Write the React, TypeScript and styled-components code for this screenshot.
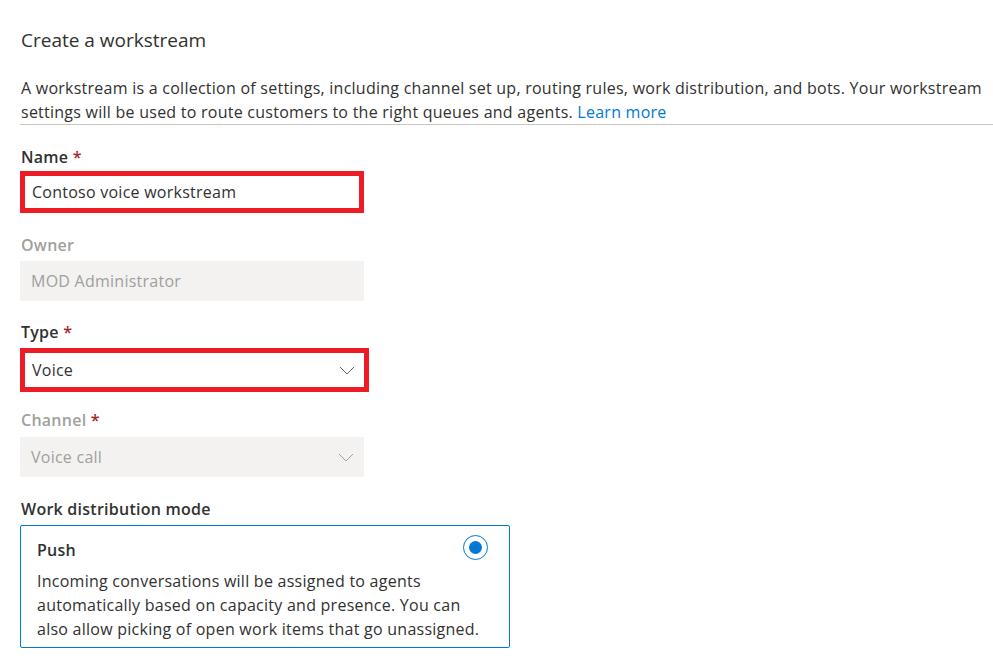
import React from "react";
import styled, { createGlobalStyle } from "styled-components";

const Global = createGlobalStyle`
  html, body { margin: 0; padding: 0; background: #ffffff; }
  body { font-family: "Open Sans", "Noto Sans", sans-serif; color: #323130; }
`;

const Page = styled.div`
  display: flex;
  flex-direction: column;
  align-items: flex-start;
  padding: 26px 0 0 20px;
  width: 973px;
  letter-spacing: 0.25px;
`;

const Title = styled.h1`
  margin: 0 0 0 1px;
  font-size: 19px;
  line-height: 28px;
  font-weight: 400;
  letter-spacing: 0;
  color: #323130;
`;

const Description = styled.p`
  margin: 22px 0 0 0;
  padding: 0 0 0 1px;
  font-size: 16px;
  line-height: 24px;
  color: #323130;
  align-self: stretch;
  border-bottom: 1px solid #c8c6c4;
  white-space: nowrap;
`;

const Link = styled.a`
  color: #0078d4;
  text-decoration: none;
`;

const Label = styled.div<{ $disabled?: boolean; $mt: number }>`
  margin: ${(p) => p.$mt}px 0 0 1px;
  font-size: 16px;
  line-height: 22px;
  font-weight: 600;
  color: ${(p) => (p.$disabled ? "#a19f9d" : "#323130")};
`;

const Star = styled.span`
  color: #a4262c;
  font-weight: 600;
`;

const Field = styled.div<{
  $w: number;
  $h: number;
  $mt: number;
  $highlight?: boolean;
  $disabled?: boolean;
}>`
  box-sizing: border-box;
  margin-top: ${(p) => p.$mt}px;
  width: ${(p) => p.$w}px;
  height: ${(p) => p.$h}px;
  display: flex;
  align-items: center;
  justify-content: space-between;
  padding: 0 ${(p) => (p.$highlight ? 9 : 10)}px 0
    ${(p) => (p.$highlight ? 7 : 11)}px;
  font-size: 16px;
  background: ${(p) => (p.$disabled ? "#f3f2f1" : "#ffffff")};
  color: ${(p) => (p.$disabled ? "#a19f9d" : "#323130")};
  border: ${(p) => (p.$highlight ? "5px solid #ed1c24" : "none")};
  border-radius: ${(p) => (p.$highlight ? 0 : 2)}px;
`;

const Chevron = styled.svg<{ $disabled?: boolean }>`
  width: 16px;
  height: 9px;
  flex: none;
  stroke: ${(p) => (p.$disabled ? "#a19f9d" : "#605e5c")};
  fill: none;
  stroke-width: 1;
`;

const Card = styled.div`
  box-sizing: border-box;
  margin-top: 5px;
  width: 490px;
  height: 123px;
  border: 1px solid #0078d4;
  border-radius: 2px;
  padding: 12px 16px 0 16px;
  display: flex;
  flex-direction: column;
`;

const CardHead = styled.div`
  display: flex;
  align-items: center;
  justify-content: space-between;
  height: 24px;
  padding-right: 5px;
`;

const CardTitle = styled.div`
  font-size: 16px;
  font-weight: 600;
  line-height: 22px;
  color: #323130;
`;

const Radio = styled.div`
  box-sizing: border-box;
  width: 25px;
  height: 25px;
  border-radius: 50%;
  border: 1px solid #0078d4;
  display: flex;
  align-items: center;
  justify-content: center;
  margin-top: -6px;
  &::after {
    content: "";
    width: 13px;
    height: 13px;
    border-radius: 50%;
    background: #0078d4;
  }
`;

const CardText = styled.p`
  margin: 7px 0 0 0;
  font-size: 16px;
  line-height: 24px;
  color: #323130;
  white-space: nowrap;
`;

const ChevronIcon = ({ disabled }: { disabled?: boolean }) => (
  <Chevron $disabled={disabled} viewBox="0 0 16 9">
    <path d="M1 1 L8 8 L15 1" />
  </Chevron>
);

export default function App() {
  return (
    <>
      <Global />
      <Page>
        <Title>Create a workstream</Title>
        <Description>
          A workstream is a collection of settings, including channel set up,
          routing rules, work distribution, and bots. Your workstream
          <br />
          settings will be used to route customers to the right queues and
          agents. <Link href="#">Learn more</Link>
        </Description>

        <Label $mt={21}>
          Name <Star>*</Star>
        </Label>
        <Field $w={344} $h={42} $mt={3} $highlight>
          Contoso voice workstream
        </Field>

        <Label $mt={21} $disabled>
          Owner
        </Label>
        <Field $w={344} $h={40} $mt={5} $disabled>
          MOD Administrator
        </Field>

        <Label $mt={20}>
          Type <Star>*</Star>
        </Label>
        <Field $w={349} $h={44} $mt={5} $highlight>
          Voice
          <ChevronIcon />
        </Field>

        <Label $mt={17} $disabled>
          Channel <Star>*</Star>
        </Label>
        <Field $w={344} $h={40} $mt={6} $disabled>
          Voice call
          <ChevronIcon disabled />
        </Field>

        <Label $mt={21}>Work distribution mode</Label>
        <Card>
          <CardHead>
            <CardTitle>Push</CardTitle>
            <Radio />
          </CardHead>
          <CardText>
            Incoming conversations will be assigned to agents
            <br />
            automatically based on capacity and presence. You can
            <br />
            also allow picking of open work items that go unassigned.
          </CardText>
        </Card>
      </Page>
    </>
  );
}
